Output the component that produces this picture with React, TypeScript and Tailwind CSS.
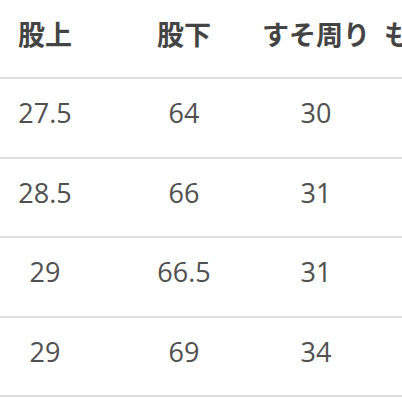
import React from "react";

const rows = [
  ["27.5", "64", "30"],
  ["28.5", "66", "31"],
  ["29", "66.5", "31"],
  ["29", "69", "34"],
];

export default function App() {
  return (
    <div className="w-[402px] h-[402px] overflow-hidden bg-white">
      <div className="w-[480px]">
        <div
          className="grid grid-cols-[90px_188px_76px_126px] h-[79px] border-b-2 border-[#dedede] text-[27px] font-bold text-[#444444] pb-[9px] items-center"
          style={{ fontFamily: '"Noto Sans CJK JP", sans-serif' }}
        >
          <div className="flex justify-center whitespace-nowrap">股上</div>
          <div className="flex justify-center whitespace-nowrap">股下</div>
          <div className="flex justify-center whitespace-nowrap">すそ周り</div>
          <div className="flex justify-start whitespace-nowrap pl-[30px]">もも</div>
        </div>
        {rows.map((r, i) => (
          <div
            key={i}
            className="grid grid-cols-[90px_188px_76px_126px] h-[79.5px] border-b-2 border-[#dedede] text-[27px] text-[#505050] items-center pb-[9px]"
            style={{ fontFamily: '"Open Sans", sans-serif' }}
          >
            {r.map((c, j) => (
              <div key={j} className="flex justify-center whitespace-nowrap">
                {c}
              </div>
            ))}
            <div />
          </div>
        ))}
      </div>
    </div>
  );
}
